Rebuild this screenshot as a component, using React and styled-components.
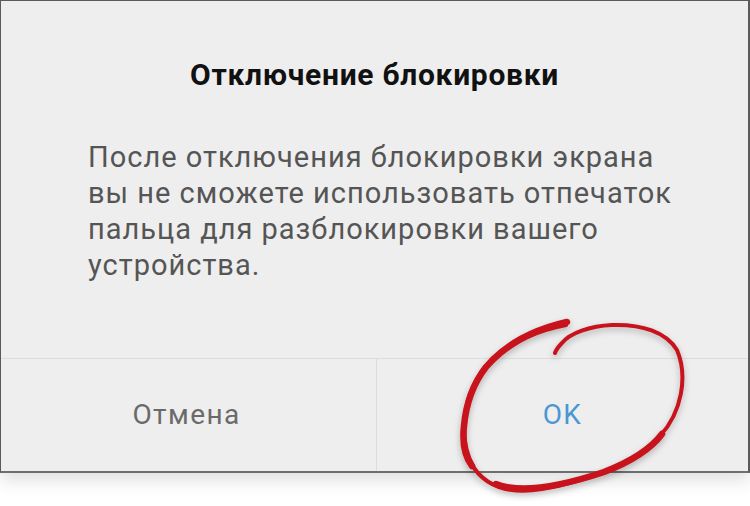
import React from "react";
import styled, { createGlobalStyle } from "styled-components";

const Global = createGlobalStyle`
  html, body {
    margin: 0;
    padding: 0;
    background: #ffffff;
  }
  body {
    font-family: Roboto, "Noto Sans", "Liberation Sans", sans-serif;
  }
`;

function App() {
  return (
    <>
      <Global />
      <Page>
        <Dialog>
          <Content>
            <Title>Отключение блокировки</Title>
            <Message>
              После отключения блокировки экрана
              <br />
              вы не сможете использовать отпечаток
              <br />
              пальца для разблокировки вашего
              <br />
              устройства.
            </Message>
          </Content>
          <Footer>
            <Action>Отмена</Action>
            <Action primary>OK</Action>
          </Footer>
        </Dialog>
        <Scribble viewBox="0 0 750 506" aria-hidden="true">
          <g stroke="#c8121c" fill="none" strokeLinecap="round">
            <path
              d="M566 325 C 540 330, 505 342, 482 372 C 462 398, 458 440, 474 468 C 488 488, 512 494, 542 489 C 584 482, 634 464, 660 436 C 682 412, 688 376, 677 350 C 666 332, 642 324, 612 325 C 590 326, 570 333, 562 343 C 558 347, 556 350, 555 353"
              strokeWidth="4"
            />
            <path
              d="M567 322 C 545 327, 510 339, 486 367 C 472 385, 466 404, 464 426 C 462 444, 466 458, 472 466"
              strokeWidth="6.5"
            />
            <path
              d="M496 484 C 522 494, 562 486, 604 472 C 630 462, 650 450, 662 434"
              strokeWidth="6.5"
            />
          </g>
        </Scribble>
      </Page>
    </>
  );
}

export default App;

const Page = styled.div`
  position: relative;
  width: 750px;
  height: 506px;
  overflow: hidden;
`;

const Dialog = styled.div`
  box-sizing: border-box;
  width: 750px;
  height: 473px;
  display: flex;
  flex-direction: column;
  background-color: #eeeeee;
  border: 1px solid #5a5a5a;
  border-right-width: 2px;
  border-bottom: 2px solid #6e6e6e;
  box-shadow: 0 8px 16px rgba(0, 0, 0, 0.12);
`;

const Content = styled.div`
  flex: 1;
  display: flex;
  flex-direction: column;
  padding: 56px 40px 0 87px;
`;

const Title = styled.h1`
  margin: 0 0 46px;
  padding-right: 47px;
  text-align: center;
  font-size: 30px;
  line-height: 36px;
  font-weight: 700;
  color: #111111;
  letter-spacing: 0.7px;
`;

const Message = styled.p`
  margin: 0;
  font-size: 29px;
  line-height: 36px;
  font-weight: 400;
  color: #555555;
  letter-spacing: 1px;
  white-space: nowrap;
`;

const Footer = styled.div`
  height: 112px;
  display: grid;
  grid-template-columns: 375px 1fr;
  border-top: 1px solid #dcdcdc;
`;

const Action = styled.div`
  display: flex;
  align-items: center;
  justify-content: center;
  font-size: 28px;
  letter-spacing: 1.4px;
  color: ${(p) => (p.primary ? "#4b97d3" : "#6a6a6a")};
  border-left: ${(p) => (p.primary ? "1px solid #dcdcdc" : "none")};
  padding-bottom: 2px;
  padding-right: ${(p) => (p.primary ? "0" : "4px")};
`;

const Scribble = styled.svg`
  position: absolute;
  left: 0;
  top: 0;
  width: 750px;
  height: 506px;
  pointer-events: none;
  filter: drop-shadow(0 3px 3px rgba(0, 0, 0, 0.25));
`;
